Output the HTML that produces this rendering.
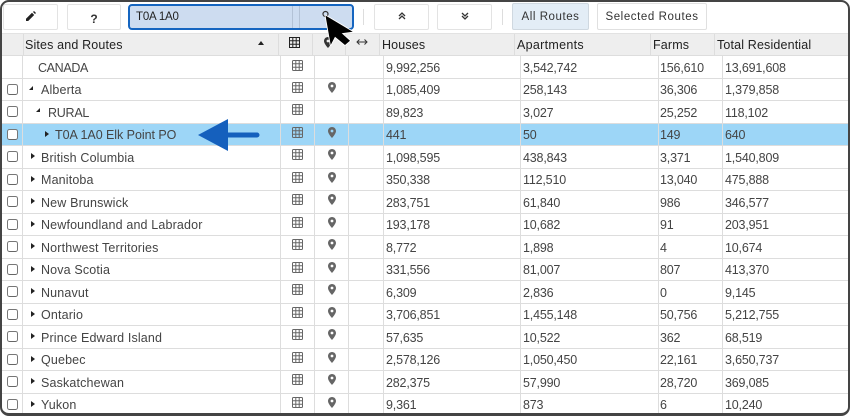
<!DOCTYPE html>
<html><head><meta charset="utf-8">
<style>
html,body{margin:0;padding:0;background:#fff}
#p{position:relative;width:850px;height:416px;overflow:hidden;background:#fff;font-family:"Liberation Sans",sans-serif;font-size:12.5px;color:#444}
#f{position:absolute;left:0;top:0;width:850px;height:416px;box-sizing:border-box;border:solid #444;border-width:2px 2px 3px 2px;border-radius:9px;z-index:5;pointer-events:none}
.bt{position:absolute;box-sizing:border-box;background:#fff;border:1px solid #e3e3e3;border-radius:2px;text-align:center;color:#333}
.sep{position:absolute;top:9px;width:1px;height:16px;background:#ddd}
#hd{position:absolute;left:2px;top:33px;width:846px;height:23px;background:#eee;border-top:1px solid #e2e2e2;box-sizing:border-box;border-bottom:1px solid #ddd}
.hl{position:absolute;top:34px;height:21px;width:1px;background:#ddd}
.ht{position:absolute;top:38px;line-height:15px;color:#222;white-space:nowrap;letter-spacing:.15px}
.vl{position:absolute;top:55px;height:359px;width:1px;background:#ddd;z-index:2}
.r{position:absolute;left:2px;width:846px;height:22.5px;box-sizing:border-box;border-bottom:1px solid #ddd}
.r.s{background:#9dd6f7}
.r span{position:absolute;top:4.5px;line-height:15px;white-space:nowrap;letter-spacing:.15px}
.r .a,.r .b,.r .c,.r .d{letter-spacing:-.18px}
.r .a{left:384px}.r .b{left:521px}.r .c{left:658px}.r .d{left:723px}
.cb{position:absolute;left:5px;top:5px;width:11px;height:11px;box-sizing:border-box;border:1px solid #777;border-bottom-color:#666;border-radius:2.5px;background:#fff}
.tr{position:absolute;top:7px;width:0;height:0;border-top:3px solid transparent;border-bottom:3px solid transparent;border-left:4px solid #222}
.td{position:absolute;top:7px;width:0;height:0;border-bottom:4px solid #222;border-left:4px solid transparent}
.g{position:absolute;left:290px;top:3px;z-index:3}
.m{position:absolute;left:326px;top:3px;z-index:3}
</style></head><body>
<div id="p">
<svg width="0" height="0" style="position:absolute"><defs>
<g id="grid"><rect x=".5" y=".5" width="10" height="10" rx="1" fill="none" stroke="#666"/><path d="M.5 3.8h10M.5 7.2h10M3.8.5v10M7.2.5v10" stroke="#666" fill="none"/></g>
<path id="pin" d="M4 0C1.8 0 0 1.8 0 4c0 2.6 3 5.8 4 7 1-1.200 4-4.400 4-7 0-2.200-1.800-4-4-4zm0 5.400A1.400 1.400 0 1 1 4 2.600a1.400 1.400 0 0 1 0 2.800z" fill="#666" fill-rule="evenodd"/>
</defs></svg>

<!-- toolbar -->
<div class="bt" style="left:3px;top:4px;width:55px;height:26px"><svg width="10" height="10" viewBox="0 0 10 10" style="position:absolute;left:22px;top:6px"><path d="M0 10V7.800L6 1.800 8.200 4 2.200 10zM7 1 8 0l2 2-1 1z" fill="#222"/></svg></div>
<div class="bt" style="left:67px;top:4px;width:54px;height:26px;font-weight:bold;font-size:12px;line-height:28px">?</div>
<div style="position:absolute;left:128px;top:4px;width:226px;height:26px;box-sizing:border-box;background:#cddcf0;border:2px solid #1565c0;border-radius:4px">
<span style="position:absolute;left:6px;top:4px;line-height:15px;color:#222;letter-spacing:-.2px;font-size:11.5px">T0A 1A0</span>
<div style="position:absolute;left:162px;top:0;width:1px;height:22px;background:#b3c2d6"></div>
<div style="position:absolute;left:169px;top:0;width:1px;height:22px;background:#b3c2d6"></div>
</div>
<svg width="12" height="12" style="position:absolute;left:319px;top:8px"><circle cx="6.500" cy="6" r="2.500" fill="none" stroke="#333" stroke-width="1.200"/></svg>
<div class="sep" style="left:363px"></div>
<div class="bt" style="left:374px;top:4px;width:55px;height:26px"><svg width="8" height="8" viewBox="0 0 8 8" style="position:absolute;left:23px;top:7px"><path d="M1 4l3-3 3 3M1 7l3-3 3 3" fill="none" stroke="#333" stroke-width="1.300"/></svg></div>
<div class="bt" style="left:437px;top:4px;width:55px;height:26px"><svg width="8" height="8" viewBox="0 0 8 8" style="position:absolute;left:23px;top:7px"><path d="M1 1l3 3 3-3M1 4l3 3 3-3" fill="none" stroke="#333" stroke-width="1.300"/></svg></div>
<div class="sep" style="left:502px"></div>
<div class="bt" style="left:512px;top:3px;width:77px;height:27px;background:#e3edf6;border-color:#cfd8e0;font-size:11.500px;line-height:27px;letter-spacing:.55px;color:#333">All Routes</div>
<div class="bt" style="left:597px;top:3px;width:110px;height:27px;border-color:#e0e0e0;font-size:11.500px;line-height:27px;letter-spacing:.58px;color:#333">Selected Routes</div>

<!-- header -->
<div id="hd"></div>
<div class="hl" style="left:23px"></div><div class="hl" style="left:278px"></div><div class="hl" style="left:312px"></div><div class="hl" style="left:345px"></div><div class="hl" style="left:379px"></div><div class="hl" style="left:514px"></div><div class="hl" style="left:650px"></div><div class="hl" style="left:714px"></div>
<span class="ht" style="left:25px">Sites and Routes</span>
<div style="position:absolute;left:258px;top:41px;width:0;height:0;border-left:3.500px solid transparent;border-right:3.500px solid transparent;border-bottom:4px solid #222"></div>
<svg width="11" height="11" style="position:absolute;left:289px;top:37px"><rect x=".5" y=".5" width="10" height="10" fill="none" stroke="#222"/><path d="M.5 3.800h10M.5 7.200h10M3.800.5v10M7.200.5v10" stroke="#222" fill="none"/></svg>
<svg width="8" height="11" style="position:absolute;left:324px;top:37px"><path d="M4 0C1.800 0 0 1.800 0 4c0 2.600 3 5.800 4 7 1-1.200 4-4.400 4-7 0-2.200-1.800-4-4-4zm0 5.400A1.400 1.400 0 1 1 4 2.600a1.400 1.400 0 0 1 0 2.800z" fill="#333" fill-rule="evenodd"/></svg>
<svg width="12" height="8" viewBox="0 0 12 8" style="position:absolute;left:356px;top:38px"><path d="M1 4h10M3.500 1.500L1 4l2.500 2.500M8.500 1.500L11 4 8.500 6.500" fill="none" stroke="#333" stroke-width="1"/></svg>
<span class="ht" style="left:382px">Houses</span>
<span class="ht" style="left:517px;letter-spacing:.3px">Apartments</span>
<span class="ht" style="left:653px">Farms</span>
<span class="ht" style="left:717px">Total Residential</span>

<!-- column lines -->
<div class="vl" style="left:22px"></div><div class="vl" style="left:280px"></div><div class="vl" style="left:314px"></div><div class="vl" style="left:348px"></div><div class="vl" style="left:383px"></div><div class="vl" style="left:520px"></div><div class="vl" style="left:658px"></div><div class="vl" style="left:722px"></div>

<!-- rows -->
<div class="r" style="top:56px"><span style="left:36px;letter-spacing:-.35px">CANADA</span><svg class="g" width="11" height="11" style="top:4px"><use href="#grid"/></svg><span class="a">9,992,256</span><span class="b">3,542,742</span><span class="c">156,610</span><span class="d">13,691,608</span></div>

<div class="r" style="top:78.500px"><i class="cb"></i><b class="td" style="left:27px"></b><span style="left:39px">Alberta</span><svg class="g" width="11" height="11"><use href="#grid"/></svg><svg class="m" width="8" height="11"><use href="#pin"/></svg><span class="a">1,085,409</span><span class="b">258,143</span><span class="c">36,306</span><span class="d">1,379,858</span></div>

<div class="r" style="top:101px"><i class="cb"></i><b class="td" style="left:34px"></b><span style="left:46px;letter-spacing:-.25px">RURAL</span><svg class="g" width="11" height="11"><use href="#grid"/></svg><span class="a">89,823</span><span class="b">3,027</span><span class="c">25,252</span><span class="d">118,102</span></div>

<div class="r s" style="top:123.500px"><i class="cb"></i><b class="tr" style="left:43px"></b><span style="left:53px;letter-spacing:-.05px">T0A 1A0 Elk Point PO</span><svg class="g" width="11" height="11"><use href="#grid"/></svg><svg class="m" width="8" height="11"><use href="#pin"/></svg><span class="a">441</span><span class="b">50</span><span class="c">149</span><span class="d">640</span></div>

<div class="r" style="top:146px"><i class="cb"></i><b class="tr" style="left:29px"></b><span style="left:39px">British Columbia</span><svg class="g" width="11" height="11"><use href="#grid"/></svg><svg class="m" width="8" height="11"><use href="#pin"/></svg><span class="a">1,098,595</span><span class="b">438,843</span><span class="c">3,371</span><span class="d">1,540,809</span></div>

<div class="r" style="top:168.500px"><i class="cb"></i><b class="tr" style="left:29px"></b><span style="left:39px">Manitoba</span><svg class="g" width="11" height="11"><use href="#grid"/></svg><svg class="m" width="8" height="11"><use href="#pin"/></svg><span class="a">350,338</span><span class="b">112,510</span><span class="c">13,040</span><span class="d">475,888</span></div>

<div class="r" style="top:191px"><i class="cb"></i><b class="tr" style="left:29px"></b><span style="left:39px">New Brunswick</span><svg class="g" width="11" height="11"><use href="#grid"/></svg><svg class="m" width="8" height="11"><use href="#pin"/></svg><span class="a">283,751</span><span class="b">61,840</span><span class="c">986</span><span class="d">346,577</span></div>

<div class="r" style="top:213.500px"><i class="cb"></i><b class="tr" style="left:29px"></b><span style="left:39px">Newfoundland and Labrador</span><svg class="g" width="11" height="11"><use href="#grid"/></svg><svg class="m" width="8" height="11"><use href="#pin"/></svg><span class="a">193,178</span><span class="b">10,682</span><span class="c">91</span><span class="d">203,951</span></div>

<div class="r" style="top:236px"><i class="cb"></i><b class="tr" style="left:29px"></b><span style="left:39px">Northwest Territories</span><svg class="g" width="11" height="11"><use href="#grid"/></svg><svg class="m" width="8" height="11"><use href="#pin"/></svg><span class="a">8,772</span><span class="b">1,898</span><span class="c">4</span><span class="d">10,674</span></div>

<div class="r" style="top:258.500px"><i class="cb"></i><b class="tr" style="left:29px"></b><span style="left:39px">Nova Scotia</span><svg class="g" width="11" height="11"><use href="#grid"/></svg><svg class="m" width="8" height="11"><use href="#pin"/></svg><span class="a">331,556</span><span class="b">81,007</span><span class="c">807</span><span class="d">413,370</span></div>

<div class="r" style="top:281px"><i class="cb"></i><b class="tr" style="left:29px"></b><span style="left:39px">Nunavut</span><svg class="g" width="11" height="11"><use href="#grid"/></svg><svg class="m" width="8" height="11"><use href="#pin"/></svg><span class="a">6,309</span><span class="b">2,836</span><span class="c">0</span><span class="d">9,145</span></div>

<div class="r" style="top:303.500px"><i class="cb"></i><b class="tr" style="left:29px"></b><span style="left:39px">Ontario</span><svg class="g" width="11" height="11"><use href="#grid"/></svg><svg class="m" width="8" height="11"><use href="#pin"/></svg><span class="a">3,706,851</span><span class="b">1,455,148</span><span class="c">50,756</span><span class="d">5,212,755</span></div>

<div class="r" style="top:326px"><i class="cb"></i><b class="tr" style="left:29px"></b><span style="left:39px">Prince Edward Island</span><svg class="g" width="11" height="11"><use href="#grid"/></svg><svg class="m" width="8" height="11"><use href="#pin"/></svg><span class="a">57,635</span><span class="b">10,522</span><span class="c">362</span><span class="d">68,519</span></div>

<div class="r" style="top:348.500px"><i class="cb"></i><b class="tr" style="left:29px"></b><span style="left:39px">Quebec</span><svg class="g" width="11" height="11"><use href="#grid"/></svg><svg class="m" width="8" height="11"><use href="#pin"/></svg><span class="a">2,578,126</span><span class="b">1,050,450</span><span class="c">22,161</span><span class="d">3,650,737</span></div>

<div class="r" style="top:371px"><i class="cb"></i><b class="tr" style="left:29px"></b><span style="left:39px">Saskatchewan</span><svg class="g" width="11" height="11"><use href="#grid"/></svg><svg class="m" width="8" height="11"><use href="#pin"/></svg><span class="a">282,375</span><span class="b">57,990</span><span class="c">28,720</span><span class="d">369,085</span></div>

<div class="r" style="top:393.500px;border-bottom:0"><i class="cb"></i><b class="tr" style="left:29px"></b><span style="left:39px">Yukon</span><svg class="g" width="11" height="11"><use href="#grid"/></svg><svg class="m" width="8" height="11"><use href="#pin"/></svg><span class="a">9,361</span><span class="b">873</span><span class="c">6</span><span class="d">10,240</span></div>

<!-- blue arrow -->
<svg width="70" height="36" viewBox="0 0 70 36" style="position:absolute;left:195px;top:117px;z-index:4"><path d="M3 18L33 2V15.500H62a2.500 2.500 0 0 1 0 5H33V34z" fill="#1560bd"/></svg>
<!-- cursor -->
<svg width="60" height="60" viewBox="310 5 60 60" style="position:absolute;left:310px;top:5px;z-index:6"><path d="M325.500 15.500L352.700 31.700 341.700 33.300 350 40.700 345 45 335 36.700 330.700 45z" fill="#000" stroke="#fff" stroke-width="1.800" stroke-linejoin="round" paint-order="stroke"/></svg>

<div id="f"></div>
</div>
</body></html>
